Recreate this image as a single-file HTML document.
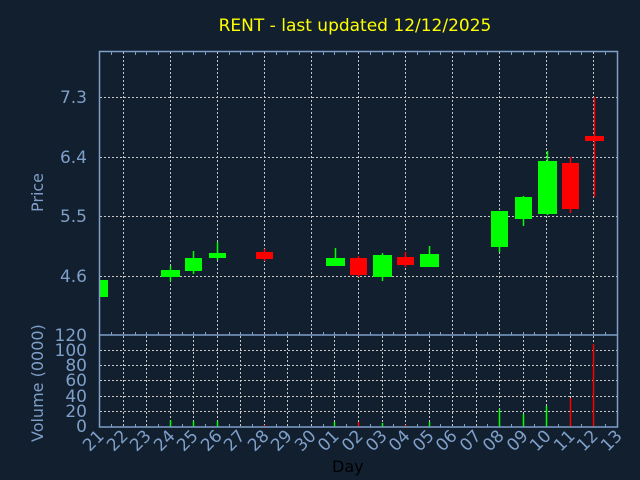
<!DOCTYPE html>
<html><head><meta charset="utf-8"><style>html,body{margin:0;padding:0;background:#111f2f;}svg{display:block}</style></head><body>
<svg width="640" height="480" xmlns="http://www.w3.org/2000/svg" font-family="DejaVu Sans, Liberation Sans, sans-serif">
<rect width="640" height="480" fill="#111f2f"/>
<text x="355" y="31" fill="#ffff00" font-size="17" text-anchor="middle">RENT - last updated 12/12/2025</text>
<g stroke="#c8c8c8" stroke-dasharray="2,2" stroke-width="1">
<line x1="100" y1="97.5" x2="617" y2="97.5"/>
<line x1="100" y1="157.5" x2="617" y2="157.5"/>
<line x1="100" y1="216.5" x2="617" y2="216.5"/>
<line x1="100" y1="276.5" x2="617" y2="276.5"/>
<line x1="123.5" y1="52" x2="123.5" y2="334"/><line x1="170.5" y1="52" x2="170.5" y2="334"/><line x1="217.5" y1="52" x2="217.5" y2="334"/><line x1="264.5" y1="52" x2="264.5" y2="334"/><line x1="311.5" y1="52" x2="311.5" y2="334"/><line x1="358.5" y1="52" x2="358.5" y2="334"/><line x1="405.5" y1="52" x2="405.5" y2="334"/><line x1="452.5" y1="52" x2="452.5" y2="334"/><line x1="499.5" y1="52" x2="499.5" y2="334"/><line x1="546.5" y1="52" x2="546.5" y2="334"/><line x1="593.5" y1="52" x2="593.5" y2="334"/>
<line x1="100" y1="350.5" x2="617" y2="350.5"/><line x1="100" y1="365.5" x2="617" y2="365.5"/><line x1="100" y1="380.5" x2="617" y2="380.5"/><line x1="100" y1="396.5" x2="617" y2="396.5"/><line x1="100" y1="411.5" x2="617" y2="411.5"/>
<line x1="123.5" y1="336" x2="123.5" y2="427"/><line x1="146.5" y1="336" x2="146.5" y2="427"/><line x1="170.5" y1="336" x2="170.5" y2="427"/><line x1="193.5" y1="336" x2="193.5" y2="427"/><line x1="217.5" y1="336" x2="217.5" y2="427"/><line x1="240.5" y1="336" x2="240.5" y2="427"/><line x1="264.5" y1="336" x2="264.5" y2="427"/><line x1="287.5" y1="336" x2="287.5" y2="427"/><line x1="311.5" y1="336" x2="311.5" y2="427"/><line x1="334.5" y1="336" x2="334.5" y2="427"/><line x1="358.5" y1="336" x2="358.5" y2="427"/><line x1="382.5" y1="336" x2="382.5" y2="427"/><line x1="405.5" y1="336" x2="405.5" y2="427"/><line x1="429.5" y1="336" x2="429.5" y2="427"/><line x1="452.5" y1="336" x2="452.5" y2="427"/><line x1="476.5" y1="336" x2="476.5" y2="427"/><line x1="499.5" y1="336" x2="499.5" y2="427"/><line x1="523.5" y1="336" x2="523.5" y2="427"/><line x1="546.5" y1="336" x2="546.5" y2="427"/><line x1="570.5" y1="336" x2="570.5" y2="427"/><line x1="593.5" y1="336" x2="593.5" y2="427"/>
</g>
<g stroke-width="1.5">
<rect x="100" y="280" width="8" height="17" fill="#00ff00"/>
<line x1="170.5" y1="266" x2="170.5" y2="281" stroke="#00ff00"/><rect x="161" y="270" width="19" height="7" fill="#00ff00"/>
<line x1="193.5" y1="251" x2="193.5" y2="274" stroke="#00ff00"/><rect x="185" y="258" width="17" height="13" fill="#00ff00"/>
<line x1="217.5" y1="242" x2="217.5" y2="260" stroke="#00ff00"/><rect x="209" y="253" width="17" height="5" fill="#00ff00"/>
<line x1="264.5" y1="249" x2="264.5" y2="261" stroke="#ff0000"/><rect x="256" y="252" width="17" height="7" fill="#ff0000"/>
<line x1="335.5" y1="248" x2="335.5" y2="266" stroke="#00ff00"/><rect x="326" y="258" width="19" height="8" fill="#00ff00"/>
<line x1="358.5" y1="256" x2="358.5" y2="277" stroke="#ff0000"/><rect x="350" y="258" width="17" height="17" fill="#ff0000"/>
<line x1="382.5" y1="253" x2="382.5" y2="281" stroke="#00ff00"/><rect x="373" y="255" width="19" height="22" fill="#00ff00"/>
<line x1="405.5" y1="252" x2="405.5" y2="267" stroke="#ff0000"/><rect x="397" y="257" width="17" height="8" fill="#ff0000"/>
<line x1="429.5" y1="246" x2="429.5" y2="267" stroke="#00ff00"/><rect x="420" y="254" width="19" height="13" fill="#00ff00"/>
<line x1="499.5" y1="211" x2="499.5" y2="252" stroke="#00ff00"/><rect x="491" y="211" width="17" height="36" fill="#00ff00"/>
<line x1="523.5" y1="196" x2="523.5" y2="226" stroke="#00ff00"/><rect x="515" y="197" width="17" height="22" fill="#00ff00"/>
<line x1="547.5" y1="151" x2="547.5" y2="215" stroke="#00ff00"/><rect x="538" y="161" width="19" height="53" fill="#00ff00"/>
<line x1="570.5" y1="157" x2="570.5" y2="213" stroke="#ff0000"/><rect x="562" y="163" width="17" height="46" fill="#ff0000"/>
<line x1="594.5" y1="97" x2="594.5" y2="197" stroke="#ff0000"/><rect x="585" y="136" width="19" height="5" fill="#ff0000"/>
</g>
<g stroke-width="1.5">
<line x1="170.5" y1="420" x2="170.5" y2="427" stroke="#00ff00"/>
<line x1="193.5" y1="421" x2="193.5" y2="427" stroke="#00ff00"/>
<line x1="217.5" y1="421" x2="217.5" y2="427" stroke="#00ff00"/>
<line x1="264.5" y1="425" x2="264.5" y2="427" stroke="#ff0000"/>
<line x1="334.5" y1="422" x2="334.5" y2="427" stroke="#00ff00"/>
<line x1="358.5" y1="422" x2="358.5" y2="427" stroke="#ff0000"/>
<line x1="382.5" y1="423" x2="382.5" y2="427" stroke="#00ff00"/>
<line x1="405.5" y1="425" x2="405.5" y2="427" stroke="#ff0000"/>
<line x1="429.5" y1="422" x2="429.5" y2="427" stroke="#00ff00"/>
<line x1="499.5" y1="409" x2="499.5" y2="427" stroke="#00ff00"/>
<line x1="523.5" y1="414" x2="523.5" y2="427" stroke="#00ff00"/>
<line x1="546.5" y1="406" x2="546.5" y2="427" stroke="#00ff00"/>
<line x1="570.5" y1="398" x2="570.5" y2="427" stroke="#ff0000"/>
<line x1="593.5" y1="344" x2="593.5" y2="427" stroke="#ff0000"/>
</g>
<g stroke="#7f9fc8" stroke-width="1.5" fill="none">
<rect x="99.5" y="51.5" width="518" height="375.5"/>
<line x1="99.5" y1="335" x2="617.5" y2="335"/>
<path stroke-width="1" d="M111.5 52v3M135.5 52v3M146.5 52v3M158.5 52v3M182.5 52v3M193.5 52v3M205.5 52v3M229.5 52v3M240.5 52v3M252.5 52v3M276.5 52v3M287.5 52v3M299.5 52v3M323.5 52v3M334.5 52v3M346.5 52v3M370.5 52v3M382.5 52v3M393.5 52v3M417.5 52v3M429.5 52v3M440.5 52v3M464.5 52v3M476.5 52v3M487.5 52v3M511.5 52v3M523.5 52v3M534.5 52v3M558.5 52v3M570.5 52v3M581.5 52v3M605.5 52v3
M111.5 335v-3M135.5 335v-3M146.5 335v-3M158.5 335v-3M182.5 335v-3M193.5 335v-3M205.5 335v-3M229.5 335v-3M240.5 335v-3M252.5 335v-3M276.5 335v-3M287.5 335v-3M299.5 335v-3M323.5 335v-3M334.5 335v-3M346.5 335v-3M370.5 335v-3M382.5 335v-3M393.5 335v-3M417.5 335v-3M429.5 335v-3M440.5 335v-3M464.5 335v-3M476.5 335v-3M487.5 335v-3M511.5 335v-3M523.5 335v-3M534.5 335v-3M558.5 335v-3M570.5 335v-3M581.5 335v-3M605.5 335v-3
M111.5 427v-3M135.5 427v-3M158.5 427v-3M182.5 427v-3M205.5 427v-3M229.5 427v-3M252.5 427v-3M276.5 427v-3M299.5 427v-3M323.5 427v-3M346.5 427v-3M370.5 427v-3M393.5 427v-3M417.5 427v-3M440.5 427v-3M464.5 427v-3M487.5 427v-3M511.5 427v-3M534.5 427v-3M558.5 427v-3M581.5 427v-3M605.5 427v-3"/>
</g>
<g fill="#7f9fc8" font-size="17" text-anchor="end">
<text x="87" y="103">7.3</text><text x="87" y="163">6.4</text><text x="87" y="222">5.5</text><text x="87" y="282">4.6</text>
<text x="87" y="341">120</text><text x="87" y="356">100</text><text x="87" y="371">80</text><text x="87" y="386">60</text><text x="87" y="402">40</text><text x="87" y="417">20</text><text x="87" y="432">0</text>
</g>
<g fill="#7f9fc8" font-size="16">
<text transform="translate(43,212) rotate(-90)">Price</text>
<text transform="translate(43,442) rotate(-90)">Volume (0000)</text>
</g>
<g fill="#7f9fc8" font-size="17" text-anchor="end">
<text transform="translate(105,437) rotate(-45)">21</text>
<text transform="translate(129,437) rotate(-45)">22</text>
<text transform="translate(152,437) rotate(-45)">23</text>
<text transform="translate(176,437) rotate(-45)">24</text>
<text transform="translate(199,437) rotate(-45)">25</text>
<text transform="translate(223,437) rotate(-45)">26</text>
<text transform="translate(246,437) rotate(-45)">27</text>
<text transform="translate(270,437) rotate(-45)">28</text>
<text transform="translate(293,437) rotate(-45)">29</text>
<text transform="translate(317,437) rotate(-45)">30</text>
<text transform="translate(340,437) rotate(-45)">01</text>
<text transform="translate(364,437) rotate(-45)">02</text>
<text transform="translate(388,437) rotate(-45)">03</text>
<text transform="translate(411,437) rotate(-45)">04</text>
<text transform="translate(435,437) rotate(-45)">05</text>
<text transform="translate(458,437) rotate(-45)">06</text>
<text transform="translate(482,437) rotate(-45)">07</text>
<text transform="translate(505,437) rotate(-45)">08</text>
<text transform="translate(529,437) rotate(-45)">09</text>
<text transform="translate(552,437) rotate(-45)">10</text>
<text transform="translate(576,437) rotate(-45)">11</text>
<text transform="translate(599,437) rotate(-45)">12</text>
<text transform="translate(623,437) rotate(-45)">13</text>
</g>
<text x="332" y="472" fill="#000000" font-size="16">Day</text>
</svg>
</body></html>
